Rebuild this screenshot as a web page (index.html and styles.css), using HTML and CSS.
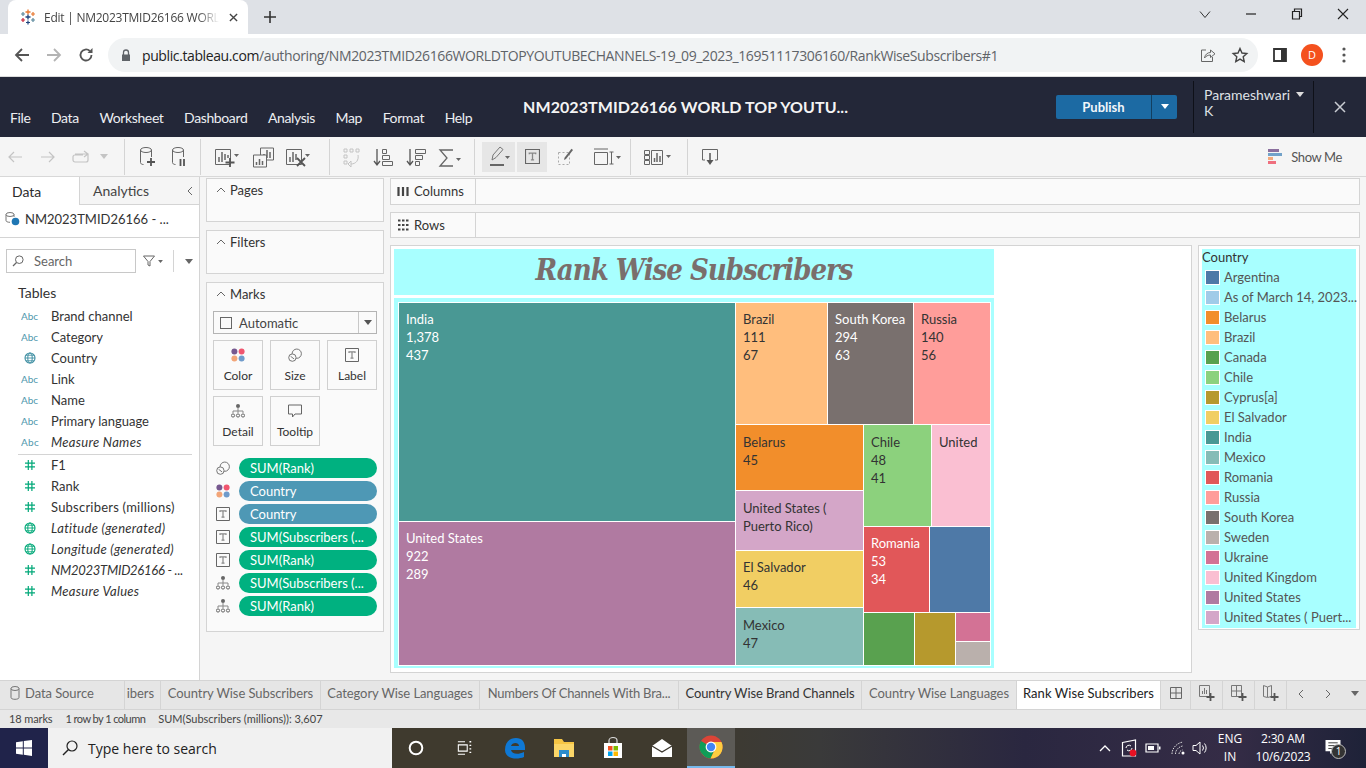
FILE: index.html
```html
<!DOCTYPE html>
<html lang="en">
<head>
<meta charset="utf-8">
<title>Edit | NM2023TMID26166 WORLD TOP YOUTUBE CHANNELS</title>
<link rel="stylesheet" href="styles.css">
</head>
<body>
<svg class="defs" width="0" height="0" aria-hidden="true">
  <defs>
    <symbol id="t-box" viewBox="0 0 14 14"><path d="M.5.5h13v13H.5z" fill="none" stroke="#666"/><path d="M4 5V3.800h6V5M7 4v6.200M5.500 10.200h3" fill="none" stroke="#888" stroke-width="1.200"/></symbol>
    <symbol id="size" viewBox="0 0 16 16"><circle cx="10" cy="6.500" r="5.300" fill="none" stroke="#666"/><circle cx="5" cy="11" r="4.200" fill="#fafafa" stroke="#666"/><path d="M3 9.500l4 3" stroke="#666"/></symbol>
    <symbol id="detail" viewBox="0 0 14 14"><circle cx="7" cy="2" r="2" fill="#666"/><path d="M7 4v3M2 9V7h10v2M7 7v2" fill="none" stroke="#888"/><circle cx="2" cy="11.500" r="1.600" fill="none" stroke="#666"/><circle cx="7" cy="11.500" r="1.600" fill="none" stroke="#666"/><circle cx="12" cy="11.500" r="1.600" fill="none" stroke="#666"/></symbol>
    <symbol id="color" viewBox="0 0 14 14"><circle cx="3.400" cy="3.400" r="3" fill="#76588f"/><circle cx="10.600" cy="3.400" r="3" fill="#f0566f"/><circle cx="3.400" cy="10.600" r="3" fill="#f2a578"/><circle cx="10.600" cy="10.600" r="3" fill="#6f9bcb"/></symbol>
    <symbol id="abc" viewBox="0 0 20 12"><text x="0" y="10" class="abc-text">Abc</text></symbol>
    <symbol id="globe" viewBox="0 0 12 12"><circle cx="6" cy="6" r="5" fill="none" stroke="#3f8fa3" stroke-width="1.100"/><ellipse cx="6" cy="6" rx="2.200" ry="5" fill="none" stroke="#3f8fa3"/><path d="M1 6h10M2 3.200h8M2 8.800h8" stroke="#3f8fa3" stroke-width=".9"/></symbol>
    <symbol id="globe-g" viewBox="0 0 12 12"><circle cx="6" cy="6" r="5" fill="none" stroke="#00a878" stroke-width="1.100"/><ellipse cx="6" cy="6" rx="2.200" ry="5" fill="none" stroke="#00a878"/><path d="M1 6h10M2 3.200h8M2 8.800h8" stroke="#00a878" stroke-width=".9"/></symbol>
    <symbol id="hash" viewBox="0 0 10 10"><path d="M3.300 0v10M6.900 0v10M0 3.200h10M0 6.800h10" stroke="#00a878" stroke-width="1.200" fill="none"/></symbol>
    <symbol id="chev" viewBox="0 0 10 6"><path d="M1 5l4-4 4 4" fill="none" stroke="#666"/></symbol>
  </defs>
</svg>

<header class="tabstrip">
  <div class="tab">
    <svg class="fav" viewBox="0 0 16 16"><path d="M8 .5v5M5.500 3h5" stroke="#e8762d" stroke-width="1.300"/><path d="M3 3v4M1 5h4" stroke="#5b879b" stroke-width="1.200"/><path d="M13 3v4M11 5h4" stroke="#e8762d" stroke-width="1.200"/><path d="M3 9v4M1 11h4" stroke="#c72035" stroke-width="1.200"/><path d="M13 9v4M11 11h4" stroke="#59879b" stroke-width="1.200"/><path d="M8 5.500v5M5.500 8h5" stroke="#1f447e" stroke-width="1.300"/><path d="M8 11.500v4M6 13.500h4" stroke="#1f447e" stroke-width="1.200"/></svg>
    <span class="tab-title">Edit | NM2023TMID26166 WORLD TOP YOUTUBE</span>
    <svg class="tab-x" viewBox="0 0 10 10"><path d="M1 1l8 8M9 1l-8 8" stroke="#444" stroke-width="1.500"/></svg>
  </div>
  <svg class="newtab" viewBox="0 0 12 12"><path d="M6 0v12M0 6h12" stroke="#333" stroke-width="1.600"/></svg>
  <div class="winctl">
    <svg viewBox="0 0 12 12" class="wc"><path d="M1 3.500l5 6 5-6" fill="none" stroke="#333"/></svg>
    <svg viewBox="0 0 12 12" class="wc wc-gap"><path d="M1 6h10" stroke="#222" stroke-width="1.200"/></svg>
    <svg viewBox="0 0 12 12" class="wc wc-gap"><path d="M1.500 3.500h7v7.500h-7zM3.500 3.500V1h7v7.500h-2" fill="none" stroke="#222" stroke-width="1.200"/></svg>
    <svg viewBox="0 0 12 12" class="wc wc-gap"><path d="M1 1l10 10M11 1L1 11" stroke="#222" stroke-width="1.100"/></svg>
  </div>
</header>

<nav class="addrbar">
  <svg class="nav-ic" viewBox="0 0 16 16"><path d="M15 8H2M8 2L2 8l6 6" fill="none" stroke="#555" stroke-width="1.800"/></svg>
  <svg class="nav-ic nav-fwd" viewBox="0 0 16 16"><path d="M1 8h13M8 2l6 6-6 6" fill="none" stroke="#b4b4b4" stroke-width="1.800"/></svg>
  <svg class="nav-ic nav-rel" viewBox="0 0 16 16"><path d="M13.500 8a5.500 5.500 0 1 1-1.700-4" fill="none" stroke="#555" stroke-width="1.800"/><path d="M14.500 1v5h-5z" fill="#555"/></svg>
  <div class="pill">
    <svg class="lock" viewBox="0 0 10 13"><path d="M2.500 6V3.500a2.500 2.500 0 0 1 5 0V6" fill="none" stroke="#5f6368" stroke-width="1.300"/><path d="M1 5.500h8V12H1z" fill="#5f6368"/></svg>
    <span class="url"><b class="url-host">public.tableau.com</b>/authoring/NM2023TMID26166WORLDTOPYOUTUBECHANNELS-19_09_2023_16951117306160/RankWiseSubscribers#1</span>
    <svg class="share" viewBox="0 0 16 16"><path d="M6 3H1.500v11.500h11V10" fill="none" stroke="#666"/><path d="M4.500 11c.5-3.500 3-5.500 6-5.500V3L15 6.800 10.500 10.500V8c-2.500 0-4.500 1-6 3z" fill="none" stroke="#666"/></svg>
    <svg class="star" viewBox="0 0 16 16"><path d="M8 1.500l2 4.500 4.800.5-3.600 3.200 1 4.800L8 12.100l-4.200 2.400 1-4.800L1.200 6.500 6 6z" fill="none" stroke="#444" stroke-width="1.400"/></svg>
  </div>
  <svg class="side-ic" viewBox="0 0 14 14"><path d="M1 1h12v12H1z" fill="none" stroke="#333" stroke-width="1.800"/><path d="M8 1h5v12H8z" fill="#333"/></svg>
  <span class="avatar">D</span>
  <svg class="dots" viewBox="0 0 4 16"><circle cx="2" cy="2" r="1.600" fill="#555"/><circle cx="2" cy="8" r="1.600" fill="#555"/><circle cx="2" cy="14" r="1.600" fill="#555"/></svg>
</nav>

<section class="appbar">
  <ul class="menu">
    <li>File</li><li>Data</li><li>Worksheet</li><li>Dashboard</li><li>Analysis</li><li>Map</li><li>Format</li><li>Help</li>
  </ul>
  <h1 class="wb-title">NM2023TMID26166 WORLD TOP YOUTU...</h1>
  <div class="publish"><span class="pub-main">Publish</span><span class="pub-arrow"><svg class="pub-caret" viewBox="0 0 8 5"><path d="M0 0h8L4 5z" fill="#fff"/></svg></span></div>
  <div class="user"><span>Parameshwari <svg class="user-caret" viewBox="0 0 8 5"><path d="M0 0h8L4 5z" fill="#ddd"/></svg></span><span>K</span></div>
  <svg class="app-x" viewBox="0 0 12 12"><path d="M1 1l10 10M11 1L1 11" stroke="#c9ccd2" stroke-width="1.500"/></svg>
</section>

<section class="toolbar">
  <div class="tg tg1">
    <svg class="ti" viewBox="0 0 24 24"><path d="M19 12H6M11 7l-5 5 5 5" fill="none" stroke="#c4c4c4" stroke-width="1.200"/></svg>
    <svg class="ti ti-m9" viewBox="0 0 24 24"><path d="M5 12h13M13 7l5 5-5 5" fill="none" stroke="#c4c4c4" stroke-width="1.200"/></svg>
    <svg class="ti ti-m9" viewBox="0 0 24 24"><path d="M6 9h13v6a2 2 0 0 1-2 2H6a2 2 0 0 1-2-2v-3a2 2 0 0 1 2-2h8M15 6l4 3-4 3" fill="none" stroke="#c4c4c4" stroke-width="1.200"/></svg>
    <svg class="caret" viewBox="0 0 8 5"><path d="M0 0h8L4 5z" fill="#c4c4c4"/></svg>
  </div>
  <div class="tg tg2">
    <svg class="ti" viewBox="0 0 24 24"><ellipse cx="11" cy="5" rx="5.500" ry="2.500" fill="none" stroke="#666"/><path d="M5.500 5v12.500c0 1 1 2 3 2M16.500 5v7" fill="none" stroke="#666"/><path d="M16 13v8M12 17h8" stroke="#555" stroke-width="1.800"/></svg>
    <svg class="ti ti-m8" viewBox="0 0 24 24"><ellipse cx="11" cy="5" rx="5.500" ry="2.500" fill="none" stroke="#666"/><path d="M5.500 5v12.500c0 1 1 2 3 2M16.500 5v7" fill="none" stroke="#666"/><path d="M13.500 14v7M17 14v7" stroke="#555" stroke-width="1.800"/></svg>
  </div>
  <div class="tg tg3">
    <svg class="ti" viewBox="0 0 24 24"><path d="M2.500 4.500h15v15h-15z" fill="none" stroke="#666"/><path d="M6 17v-5M9 17V7M12 15V9M15 13v-3" stroke="#666" stroke-width="1.500"/><path d="M17 13v9M12.500 17.500h9" stroke="#555" stroke-width="1.800"/><path d="M21 9h5l-2.500 3z" fill="#666"/></svg>
    <svg class="ti ti-m14" viewBox="0 0 24 24"><path d="M9.500 3h13v12h-13z" fill="#f5f5f5" stroke="#666"/><path d="M13 13V9M16 13V5M19 13V7" stroke="#666" stroke-width="1.500"/><path d="M2.500 10h13v12h-13z" fill="#f5f5f5" stroke="#666"/><path d="M5.500 20v-3M8.500 20v-6M11.500 20v-4" stroke="#666" stroke-width="1.500"/></svg>
    <svg class="ti ti-m9" viewBox="0 0 24 24"><path d="M2.500 4.500h15v15h-15z" fill="none" stroke="#666"/><path d="M6 17v-5M9 17V7M12 15V9" stroke="#666" stroke-width="1.500"/><path d="M13 13l8 8M21 13l-8 8" stroke="#555" stroke-width="1.800"/><path d="M21 9h5l-2.500 3z" fill="#666"/></svg>
  </div>
  <div class="tg tg4">
    <svg class="ti" viewBox="0 0 24 24"><path d="M5 4h3v3H5zM11 4h3v3h-3zM17 4h3v3h-3zM5 10h3v3H5zM5 16h3v3H5z" fill="none" stroke="#c4c4c4"/><path d="M19 10c1 5-2 9-7 9M12 16v6l-3-3z" fill="none" stroke="#c4c4c4"/></svg>
    <svg class="ti ti-m8" viewBox="0 0 24 24"><path d="M6 4v15M3 16l3 4 3-4" fill="none" stroke="#555" stroke-width="1.300"/><path d="M11.500 4.500h4v4h-4zM11.500 10.500h7v4h-7zM11.500 16.500h10v4h-10z" fill="none" stroke="#666"/></svg>
    <svg class="ti ti-m9" viewBox="0 0 24 24"><path d="M6 4v15M3 16l3 4 3-4" fill="none" stroke="#555" stroke-width="1.300"/><path d="M11.500 4.500h10v4h-10zM11.500 10.500h7v4h-7zM11.500 16.500h4v4h-4z" fill="none" stroke="#666"/></svg>
    <svg class="ti ti-m8" viewBox="0 0 24 24"><path d="M17 5H4l7 8-7 8h13" fill="none" stroke="#666" stroke-width="1.300"/><path d="M20 13h5l-2.500 3z" fill="#666"/></svg>
  </div>
  <div class="tg tg5">
    <span class="tbtn tbtn-a"><svg class="ti" viewBox="0 0 24 24"><path d="M7 15l1-5 7-8 3 2.500-7 8z" fill="none" stroke="#777"/><path d="M5 20h14" stroke="#666" stroke-width="2"/><path d="M20 11h5l-2.500 3z" fill="#666"/></svg></span>
    <span class="tbtn tbtn-b"><svg class="ti-t" viewBox="0 0 14 14"><use href="#t-box"/></svg></span>
    <svg class="ti ti-m7" viewBox="0 0 24 24"><path d="M4.500 7.500h11v12h-11z" fill="none" stroke="#aaa" stroke-dasharray="2 2"/><path d="M10 15l2-1 7-9-1.500-1.200-7 9z" fill="#666"/></svg>
    <svg class="ti ti-m13" viewBox="0 0 24 24"><path d="M3.500 7.500h13v12h-13zM3 4h14" fill="none" stroke="#666"/><path d="M20.500 7v12M18.500 7h4M18.500 19h4" fill="none" stroke="#666"/><path d="M25 11h5l-2.500 3z" fill="#666"/></svg>
  </div>
  <div class="tg tg6">
    <svg class="ti" viewBox="0 0 24 24"><path d="M2.500 5.500h5v4h-5zM2.500 10.500h5v4h-5zM2.500 15.500h5v4h-5zM9.500 5.500h11v14h-11z" fill="none" stroke="#666"/><path d="M12.500 17v-4M15 17V8M18 17v-6" stroke="#666" stroke-width="1.500"/><path d="M24 10h5l-2.500 3z" fill="#666"/></svg>
  </div>
  <div class="tg tg7">
    <svg class="ti" viewBox="0 0 24 24"><path d="M7 15H4.500V4.500h15V15H17" fill="none" stroke="#666"/><path d="M12 8v9" stroke="#555" stroke-width="1.500"/><path d="M8.500 15h7L12 20z" fill="#555"/></svg>
  </div>
  <div class="showme">
    <svg class="sm-ic" viewBox="0 0 14 16"><path d="M0 0h11v3H0z" fill="#8b6f9e"/><path d="M0 4h14v3H0z" fill="#72a2c9"/><path d="M0 8h5v3H0z" fill="#f2a97c"/><path d="M0 12h8v3H0z" fill="#ef6f7e"/></svg>
    <span>Show Me</span>
  </div>
</section>

<main class="workspace">
  <aside class="datapane">
    <div class="dp-tabs">
      <span class="dp-tab dp-active">Data</span>
      <span class="dp-tab dp-inactive">Analytics<svg class="dp-back" viewBox="0 0 6 10"><path d="M5 1L1 5l4 4" fill="none" stroke="#666"/></svg></span>
    </div>
    <div class="dp-source">
      <svg class="src-ic" viewBox="0 0 15 14"><ellipse cx="5" cy="2.500" rx="4" ry="2" fill="none" stroke="#777"/><path d="M1 2.500v6c0 1 1.500 1.800 4 1.800M9 2.500V5" fill="none" stroke="#777"/><circle cx="10.500" cy="9.500" r="3.800" fill="#1f77b4"/></svg>
      <span>NM2023TMID26166 - ...</span>
    </div>
    <div class="dp-search">
      <div class="searchbox"><svg class="search-ic" viewBox="0 0 12 12"><circle cx="7.300" cy="4.700" r="3.800" fill="none" stroke="#666"/><path d="M4.500 7.500L1 11" stroke="#666" stroke-width="1.200"/></svg><span>Search</span></div>
      <svg class="funnel" viewBox="0 0 12 12"><path d="M.5 1h11L7 6.500V11L5 10V6.500z" fill="none" stroke="#666"/></svg>
      <svg class="caret small" viewBox="0 0 8 5"><path d="M0 0h8L4 5z" fill="#666"/></svg>
      <i class="vsep"></i>
      <svg class="caret lone" viewBox="0 0 8 5"><path d="M0 0h8L4 5z" fill="#666"/></svg>
    </div>
    <h2 class="tables">Tables</h2>
    <ul class="fields dims">
      <li><svg class="f-abc"><use href="#abc"/></svg>Brand channel</li>
      <li><svg class="f-abc"><use href="#abc"/></svg>Category</li>
      <li><svg class="f-sym"><use href="#globe"/></svg>Country</li>
      <li><svg class="f-abc"><use href="#abc"/></svg>Link</li>
      <li><svg class="f-abc"><use href="#abc"/></svg>Name</li>
      <li><svg class="f-abc"><use href="#abc"/></svg>Primary language</li>
      <li class="it"><svg class="f-abc"><use href="#abc"/></svg>Measure Names</li>
    </ul>
    <ul class="fields meas">
      <li><svg class="f-hash"><use href="#hash"/></svg>F1</li>
      <li><svg class="f-hash"><use href="#hash"/></svg>Rank</li>
      <li class="wide"><svg class="f-hash"><use href="#hash"/></svg>Subscribers (millions)</li>
      <li class="it"><svg class="f-sym"><use href="#globe-g"/></svg>Latitude (generated)</li>
      <li class="it"><svg class="f-sym"><use href="#globe-g"/></svg>Longitude (generated)</li>
      <li class="it tight"><svg class="f-hash"><use href="#hash"/></svg>NM2023TMID26166 - ...</li>
      <li class="it"><svg class="f-hash"><use href="#hash"/></svg>Measure Values</li>
    </ul>
  </aside>

  <div class="cards">
    <section class="card card-sm"><h3><svg class="chev"><use href="#chev"/></svg>Pages</h3></section>
    <section class="card card-sm"><h3><svg class="chev"><use href="#chev"/></svg>Filters</h3></section>
    <section class="card card-marks">
      <h3><svg class="chev"><use href="#chev"/></svg>Marks</h3>
      <div class="marktype"><i class="mt-box"></i><span class="mt-label">Automatic</span><span class="mt-drop"><svg class="caret" viewBox="0 0 8 5"><path d="M0 0h8L4 5z" fill="#555"/></svg></span></div>
      <div class="markbtns">
        <div class="mb"><svg class="mb-ic"><use href="#color"/></svg>Color</div>
        <div class="mb"><svg class="mb-ic"><use href="#size"/></svg>Size</div>
        <div class="mb"><svg class="mb-ic"><use href="#t-box"/></svg>Label</div>
        <div class="mb"><svg class="mb-ic"><use href="#detail"/></svg>Detail</div>
        <div class="mb"><svg class="mb-ic" viewBox="0 0 14 14"><path d="M.5 1h13v9H7l-2.500 3v-3h-4z" fill="none" stroke="#666"/></svg>Tooltip</div>
      </div>
      <ul class="pills">
        <li><svg class="pill-ic"><use href="#size"/></svg><span class="p p-g">SUM(Rank)</span></li>
        <li><svg class="pill-ic"><use href="#color"/></svg><span class="p p-b">Country</span></li>
        <li><svg class="pill-ic"><use href="#t-box"/></svg><span class="p p-b">Country</span></li>
        <li><svg class="pill-ic"><use href="#t-box"/></svg><span class="p p-g">SUM(Subscribers (...</span></li>
        <li><svg class="pill-ic"><use href="#t-box"/></svg><span class="p p-g">SUM(Rank)</span></li>
        <li><svg class="pill-ic"><use href="#detail"/></svg><span class="p p-g">SUM(Subscribers (...</span></li>
        <li><svg class="pill-ic"><use href="#detail"/></svg><span class="p p-g">SUM(Rank)</span></li>
      </ul>
    </section>
  </div>

  <div class="canvas">
    <div class="shelf shelf-c">
      <div class="shelf-label"><svg class="shelf-ic" viewBox="0 0 12 12"><path d="M1.500 2v9M6 2v9M10.500 2v9" stroke="#444" stroke-width="2.200"/></svg>Columns</div>
    </div>
    <div class="shelf shelf-r">
      <div class="shelf-label"><svg class="shelf-ic" viewBox="0 0 12 12"><path d="M1 1.500h11M1 6h11M1 10.500h11" stroke="#444" stroke-width="2" stroke-dasharray="2.500 1.500"/></svg>Rows</div>
    </div>
    <div class="vizrow">
      <div class="viz">
        <h2 class="viz-title">Rank Wise Subscribers</h2>
        <div class="tree">
          <div class="tm">
            <div class="col c-left">
              <div class="cell india lt h-india">India<br>1,378<br>437</div>
              <div class="cell usa lt h-usa">United States<br>922<br>289</div>
            </div>
            <div class="col c-right">
              <div class="rowx h-top">
                <div class="cell brazil w-br">Brazil<br>111<br>67</div>
                <div class="cell korea lt w-sk">South Korea<br>294<br>63</div>
                <div class="cell russia w-ru">Russia<br>140<br>56</div>
              </div>
              <div class="rowx h-bot">
                <div class="col w-bl">
                  <div class="cell low belarus h-be">Belarus<br>45</div>
                  <div class="cell low uspr h-pr">United States (<br>Puerto Rico)</div>
                  <div class="cell elsal h-es">El Salvador<br>46</div>
                  <div class="cell low mexico h-me">Mexico<br>47</div>
                </div>
                <div class="col w-brr">
                  <div class="rowx h-r1">
                    <div class="cell low chile w-ch">Chile<br>48<br>41</div>
                    <div class="cell low uk w-uk">United</div>
                  </div>
                  <div class="rowx h-r2">
                    <div class="cell romania lt w-ro">Romania<br>53<br>34</div>
                    <div class="cell argentina w-ar"></div>
                  </div>
                  <div class="rowx h-r3">
                    <div class="cell canada w-ca"></div>
                    <div class="cell cyprus w-cy"></div>
                    <div class="col w-uk2">
                      <div class="cell ukraine h-uk"></div>
                      <div class="cell sweden h-sw"></div>
                    </div>
                  </div>
                </div>
              </div>
            </div>
          </div>
        </div>
      </div>
      <aside class="legend">
        <div class="legend-in">
          <h4>Country</h4>
          <ul>
            <li><i class="sw argentina"></i>Argentina</li>
            <li><i class="sw asof"></i>As of March 14, 2023...</li>
            <li><i class="sw belarus"></i>Belarus</li>
            <li><i class="sw brazil"></i>Brazil</li>
            <li><i class="sw canada"></i>Canada</li>
            <li><i class="sw chile"></i>Chile</li>
            <li><i class="sw cyprus"></i>Cyprus[a]</li>
            <li><i class="sw elsal"></i>El Salvador</li>
            <li><i class="sw india"></i>India</li>
            <li><i class="sw mexico"></i>Mexico</li>
            <li><i class="sw romania"></i>Romania</li>
            <li><i class="sw russia"></i>Russia</li>
            <li><i class="sw korea"></i>South Korea</li>
            <li><i class="sw sweden"></i>Sweden</li>
            <li><i class="sw ukraine"></i>Ukraine</li>
            <li><i class="sw uk"></i>United Kingdom</li>
            <li><i class="sw usa"></i>United States</li>
            <li><i class="sw uspr"></i>United States ( Puert...</li>
          </ul>
        </div>
      </aside>
    </div>
  </div>
</main>

<section class="sheettabs">
  <div class="st st-ds"><svg class="st-db" viewBox="0 0 10 14"><ellipse cx="5" cy="2.500" rx="4" ry="2" fill="none" stroke="#777"/><path d="M1 2.500v9c0 1 1.500 1.800 4 1.800s4-.8 4-1.800v-9" fill="none" stroke="#777"/></svg>Data Source</div>
  <div class="st st-cut">ibers</div>
  <div class="st st-1">Country Wise Subscribers</div>
  <div class="st st-2">Category Wise Languages</div>
  <div class="st st-3">Numbers Of Channels With Bra...</div>
  <div class="st st-4 st-dark">Country Wise Brand Channels</div>
  <div class="st st-5">Country Wise Languages</div>
  <div class="st st-6 st-on">Rank Wise Subscribers</div>
  <div class="st st-7"><svg class="st-ic" viewBox="0 0 12 12"><path d="M.5.500h11v11H.5zM.5 6h11M6 .5v11" fill="none" stroke="#666"/></svg></div>
  <div class="st st-add"><svg class="st-new" viewBox="0 0 18 18"><path d="M1.500 1.500h10v11h-10z" fill="none" stroke="#777"/><path d="M4.500 10V7M6.500 10V4M8.500 10V6" stroke="#777"/><path d="M12.500 9v8M8.500 13h8" stroke="#555" stroke-width="1.800"/></svg></div>
  <div class="st st-add"><svg class="st-new" viewBox="0 0 18 18"><path d="M1.500 1.500h10v11h-10zM1.500 7h10M6.500 1.500v11" fill="none" stroke="#777"/><path d="M12.500 9v8M8.500 13h8" stroke="#555" stroke-width="1.800"/></svg></div>
  <div class="st st-add"><svg class="st-new" viewBox="0 0 18 18"><path d="M1.500 1.500l4 1.500 4-1.500v11l-4 1-4-1zM5.500 3v10" fill="none" stroke="#777"/><path d="M12.500 9v8M8.500 13h8" stroke="#555" stroke-width="1.800"/></svg></div>
  <div class="st-nav">
    <svg class="sn" viewBox="0 0 6 10"><path d="M5 1L1 5l4 4" fill="none" stroke="#666"/></svg>
    <svg class="sn" viewBox="0 0 6 10"><path d="M1 1l4 4-4 4" fill="none" stroke="#666"/></svg>
    <svg class="caret" viewBox="0 0 8 5"><path d="M0 0h8L4 5z" fill="#666"/></svg>
  </div>
</section>

<section class="status"><span class="s1">18 marks</span><span class="s2">1 row by 1 column</span><span>SUM(Subscribers (millions)): 3,607</span></section>

<footer class="taskbar">
  <div class="start"><svg class="win" viewBox="0 0 16 16"><path d="M0 2.200L6.800 1.200V7.500H0zM7.800 1L16 0v7.500H7.800zM0 8.500h6.800v6.300L0 13.800zM7.800 8.500H16V16l-8.200-1.200z" fill="#fff"/></svg></div>
  <div class="tsearch"><svg class="ts-ic" viewBox="0 0 16 16"><circle cx="10" cy="6" r="5" fill="none" stroke="#222" stroke-width="1.200"/><path d="M6.500 9.500L1 15" stroke="#222" stroke-width="1.400"/></svg><span>Type here to search</span></div>
  <div class="tapps">
    <span class="ta"><svg class="ta-ic" viewBox="0 0 16 16"><circle cx="8" cy="8" r="6.300" fill="none" stroke="#fff" stroke-width="2"/></svg></span>
    <span class="ta"><svg class="ta-ic" viewBox="0 0 18 16"><path d="M1 1h8M1 15h8M1.500 4.500h10v7h-10z" fill="none" stroke="#fff" stroke-width="1.200"/><path d="M14 1h2M14 5h2M14 9h2M14 13h2" stroke="#fff" stroke-width="1.500"/></svg></span>
    <span class="ta"><svg class="ta-big" viewBox="0 0 22 22"><path d="M1 13C1 5 6 1 12 1c6 0 9 4 9 10v2H7c.5 4 7 5 13 2v5c-7 3-19 2-19-7zM7 9h8c0-4-7-4-8 0z" fill="#0f78d4"/></svg></span>
    <span class="ta"><svg class="ta-big" viewBox="0 0 22 22"><path d="M1 2h8l2 3h10v15H1z" fill="#f6c544"/><path d="M1 7h20v13H1z" fill="#fbd668"/><path d="M6 13h10v7H6z" fill="#2d8ccc"/><path d="M9 17h4v3H9z" fill="#fff"/></svg></span>
    <span class="ta"><svg class="ta-big" viewBox="0 0 22 22"><path d="M2 6h18v15H2z" fill="#fff"/><path d="M7 6V3.500a4 3 0 0 1 8 0V6" fill="none" stroke="#ddd" stroke-width="1.200"/><path d="M6 9h4.500v4.500H6z" fill="#f25022"/><path d="M11.500 9H16v4.500h-4.500z" fill="#7fba00"/><path d="M6 14.500h4.500V19H6z" fill="#00a4ef"/><path d="M11.500 14.500H16V19h-4.500z" fill="#ffb900"/></svg></span>
    <span class="ta"><svg class="ta-big" viewBox="0 0 22 22"><path d="M1 9l10-7 10 7v11H1z" fill="#fff"/><path d="M1 9l10 6 10-6" fill="none" stroke="#3a352b" stroke-width="1.300"/></svg></span>
    <span class="ta ta-on"><svg class="ta-chrome" viewBox="0 0 24 24"><circle cx="12" cy="12" r="11.500" fill="#db4437"/><path d="M12 12L2.500 18.500A11.500 11.500 0 0 1 2 6z" fill="#0f9d58"/><path d="M12 12l5 0-5.500 11.500A11.500 11.500 0 0 1 2.500 18z" fill="#0f9d58"/><path d="M12 7h10.500a11.500 11.500 0 0 1-11 16.500L17 12z" fill="#ffcd40"/><circle cx="12" cy="12" r="5.400" fill="#fff"/><circle cx="12" cy="12" r="4.200" fill="#4285f4"/></svg></span>
  </div>
  <div class="tray">
    <svg class="tr-up" viewBox="0 0 12 7"><path d="M1 6l5-5 5 5" fill="none" stroke="#fff" stroke-width="1.300"/></svg>
    <svg class="tr-sec" viewBox="0 0 16 18"><path d="M1.500 3.500L14.500 1v16H1.500z" fill="none" stroke="#fff" stroke-width="1.200"/><path d="M5 9a3 3 0 0 1 5-2M11 9a3 3 0 0 1-5 2" fill="none" stroke="#fff"/><circle cx="12" cy="14" r="3.400" fill="#e81123"/></svg>
    <svg class="tr-bat" viewBox="0 0 16 10"><path d="M1 1h12v8H1z" fill="none" stroke="#fff" stroke-width="1.200"/><path d="M3 3h6v4H3z" fill="#fff"/><path d="M14 3.500h1.500v3H14z" fill="#fff"/></svg>
    <svg class="tr-wifi" viewBox="0 0 14 14"><path d="M1 13C1 7 6 2 12 1M4.500 13c0-4 3-7 7-8M8 13c0-2 1.500-3.500 3.500-4" fill="none" stroke="#ddd" stroke-dasharray="1.500 1"/><circle cx="12" cy="12" r="1.500" fill="#fff"/></svg>
    <svg class="tr-vol" viewBox="0 0 16 16"><path d="M1 5.500h3L8 2v12L4 10.500H1z" fill="none" stroke="#fff"/><path d="M10.500 5.500a4 4 0 0 1 0 5M12.500 3.500a7 7 0 0 1 0 9" fill="none" stroke="#fff"/></svg>
    <div class="tr-lang"><span>ENG</span><span>IN</span></div>
    <div class="tr-clock"><span>2:30 AM</span><span>10/6/2023</span></div>
    <div class="tr-note"><svg class="note-ic" viewBox="0 0 16 16"><path d="M0 0h16v12H8l-3 3v-3H0z" fill="#fff"/><path d="M3 3h10M3 6h10M3 9h7" stroke="#333"/></svg><span class="note-badge">1</span></div>
  </div>
</footer>
</body>
</html>
```

FILE: styles.css
```css
* { box-sizing: border-box; }
html, body { margin: 0; padding: 0; }
body {
  width: 1366px; height: 768px; overflow: hidden;
  display: flex; flex-direction: column;
  font-family: Lato, "Open Sans", sans-serif; font-size: 13px; color: #333;
  background: #f5f5f5;
}
ul { list-style: none; margin: 0; padding: 0; }
h1, h2, h3, h4 { margin: 0; font-weight: 400; }
svg { display: block; flex: none; overflow: visible; }
.defs { position: absolute; }
.abc-text { font: 10px Lato, sans-serif; fill: #4f97ad; }

/* browser tab strip */
.tabstrip { height: 34px; background: #dee1e6; display: flex; align-items: flex-end; padding-left: 8px; }
.tab { width: 240px; height: 34px; background: #fff; border-radius: 8px 8px 0 0; display: flex; align-items: center; padding-left: 12px; }
.fav { width: 16px; height: 16px; }
.tab-title { font: 12px "Open Sans", sans-serif; color: #444; margin-left: 8px; width: 175px; white-space: nowrap; overflow: hidden; letter-spacing: -.25px; -webkit-mask-image: linear-gradient(90deg, #000 88%, transparent); mask-image: linear-gradient(90deg, #000 88%, transparent); }
.tab-x { width: 9px; height: 9px; margin-left: 10px; }
.newtab { width: 12px; height: 12px; margin: 0 0 11px 16px; }
.winctl { margin-left: auto; display: flex; align-items: center; height: 28px; padding-right: 17px; align-self: flex-start; }
.wc { width: 12px; height: 12px; }
.wc-gap { margin-left: 34px; }

/* address bar */
.addrbar { height: 43px; background: #fff; display: flex; align-items: center; padding-left: 14px; border-bottom: 1px solid #dcdcdc; }
.nav-ic { width: 16px; height: 16px; }
.nav-fwd { margin-left: 16px; }
.nav-rel { margin-left: 16px; }
.pill { width: 1150px; height: 34px; margin-left: 14px; background: #f1f3f4; border-radius: 17px; display: flex; align-items: center; padding-left: 13px; }
.lock { width: 10px; height: 13px; }
.url { font: 14px "Open Sans", sans-serif; color: #5f6368; margin-left: 11px; width: 880px; white-space: nowrap; overflow: hidden; letter-spacing: -.39px; }
.url-host { font-weight: 400; color: #222; }
.share { width: 16px; height: 16px; margin-left: 178px; }
.star { width: 16px; height: 16px; margin-left: 16px; }
.side-ic { width: 14px; height: 14px; margin-left: 15px; }
.avatar { width: 22px; height: 22px; margin-left: 14px; border-radius: 50%; background: #f4511e; color: #fff; font: 11px/22px "Open Sans", sans-serif; text-align: center; }
.dots { width: 4px; height: 16px; margin-left: 19px; }

/* dark app bar */
.appbar { height: 60px; background: #232738; color: #fff; display: flex; align-items: center; position: relative; padding-left: 10px; }
.menu { display: flex; gap: 20.6px; font-size: 14px; color: #eceef2; margin-top: 21px; letter-spacing: -.38px; width: 464px; }
.wb-title { font-size: 16px; font-weight: 700; color: #f4f4f4; margin-left: 49px; width: 533px; margin-top: -1px; white-space: nowrap; letter-spacing: .09px; }
.publish { display: flex; height: 24px; margin-top: -1px; border-radius: 2px; overflow: hidden; background: #1c6aa3; }
.pub-main { width: 96px; text-align: center; font: 700 13px/24px Lato, sans-serif; color: #f2f6fa; border-right: 1px solid #123f60; }
.pub-arrow { width: 25px; display: flex; align-items: center; justify-content: center; }
.pub-caret { width: 8px; height: 5px; }
.user { width: 121px; margin-left: 16px; height: 52px; border: solid #0e1018; border-width: 0 1px; padding: 6px 0 0 10px; font-size: 14px; line-height: 16px; color: #dfe1e6; display: flex; flex-direction: column; }
.user-caret { display: inline-block; width: 8px; height: 5px; margin: 0 0 3px 2px; }
.app-x { width: 12px; height: 12px; margin-left: 20px; }

/* toolbar */
.toolbar { height: 40px; background: #f5f5f5; display: flex; align-items: center; border-bottom: 1px solid #d8d8d8; }
.tg { height: 36px; display: flex; align-items: center; border-right: 1px solid #d4d4d4; }
.tg1 { width: 125px; padding-left: 3px; }
.tg2 { width: 76px; padding-left: 10px; }
.tg3 { width: 129px; padding-left: 12px; }
.tg4 { width: 145px; padding-left: 9px; }
.tg5 { width: 156px; padding-left: 7px; }
.tg6 { width: 57px; padding-left: 11px; }
.tg7 { width: auto; padding-left: 10px; border-right: 0; }
.ti { width: 24px; height: 24px; }
.ti-m9 { margin-left: 9px; }
.ti-m8 { margin-left: 8px; }
.ti-m14 { margin-left: 14px; }
.ti-m7 { margin-left: 7px; }
.ti-m13 { margin-left: 13px; }
.caret { width: 8px; height: 5px; }
.tg1 .caret { margin-left: 7px; }
.tbtn { height: 30px; display: flex; align-items: center; justify-content: center; background: #e6e6e6; }
.tbtn-a { width: 33px; padding-right: 4px; }
.tbtn-b { width: 30px; margin-left: 2px; }
.ti-t { width: 15px; height: 15px; }
.showme { margin-left: auto; display: flex; align-items: center; padding-right: 24px; color: #555; font-size: 13px; letter-spacing: -.4px; }
.sm-ic { width: 14px; height: 16px; margin-right: 9px; }

/* workspace */
.workspace { height: 503px; display: flex; background: #f5f5f5; }
.datapane { width: 200px; background: #fff; border-right: 1px solid #d4d4d4; }
.dp-tabs { display: flex; height: 28px; }
.dp-tab { display: flex; align-items: center; font-size: 14px; }
.dp-active { width: 79px; padding-left: 12px; color: #2b2b2b; }
.dp-inactive { flex: 1; padding-left: 13px; background: #f5f5f5; border: solid #d4d4d4; border-width: 0 0 1px 1px; color: #444; justify-content: space-between; padding-right: 6px; }
.dp-back { width: 6px; height: 10px; }
.dp-source { height: 33px; padding: 0 0 4px 5px; display: flex; align-items: center; gap: 5px; border-bottom: 1px solid #d4d4d4; color: #333; }
.src-ic { width: 15px; height: 14px; }
.dp-search { display: flex; align-items: center; margin-top: 11px; padding-left: 6px; height: 24px; }
.searchbox { width: 130px; height: 24px; border: 1px solid #c8c8c8; display: flex; align-items: center; padding-left: 5px; color: #666; background: #fff; }
.search-ic { width: 12px; height: 12px; margin-right: 10px; }
.funnel { width: 12px; height: 12px; margin-left: 7px; }
.caret.small { width: 5px; height: 3px; margin-left: 3px; }
.vsep { width: 1px; height: 22px; background: #d4d4d4; margin-left: 10px; }
.caret.lone { margin-left: 11px; }
.tables { font-size: 14px; color: #333; margin: 11px 0 0 18px; line-height: 18px; }
.fields { font-size: 13px; }
.fields li { height: 21px; display: flex; align-items: center; padding-left: 51px; position: relative; color: #333; white-space: nowrap; }
.fields .it { font-style: italic; letter-spacing: .3px; }
.fields .wide { letter-spacing: .22px; }
.fields .tight { letter-spacing: -.25px; }
.dims { margin: 3px 6px 0 0; }
.meas { margin: 2px 7px 0 18px; border-top: 1px solid #d4d4d4; }
.meas li { padding-left: 33px; }
.meas li:first-child { height: 20px; }
.f-abc { position: absolute; left: 21px; top: 5px; width: 20px; height: 12px; }
.f-sym { position: absolute; left: 24px; top: 5px; width: 12px; height: 12px; }
.f-hash { position: absolute; left: 7px; top: 6px; width: 10px; height: 10px; }
.meas .f-sym { left: 6px; }
.meas li:first-child .f-hash { top: 5px; }

/* cards */
.cards { width: 190px; padding: 1px 6px 0; display: flex; flex-direction: column; gap: 8px; }
.card { background: #fafafa; border: 1px solid #d4d4d4; }
.card-sm { height: 44px; }
.card h3 { font-size: 13px; color: #333; display: flex; align-items: center; height: 22px; padding-left: 9px; gap: 4px; }
.chev { width: 10px; height: 6px; }
.card-marks { height: 350px; padding-bottom: 6px; }
.card-marks .marktype { margin: 6px 6px 0; }
.marktype { height: 23px; border: 1px solid #b4b4b4; display: flex; align-items: center; background: #fafafa; }
.mt-box { width: 12px; height: 12px; border: 1px solid #666; margin-left: 6px; }
.mt-label { margin-left: 7px; flex: 1; color: #444; }
.mt-drop { width: 18px; height: 21px; border-left: 1px solid #c8c8c8; display: flex; align-items: center; justify-content: center; }
.markbtns { display: grid; grid-template-columns: repeat(3, 50px); gap: 6px 7px; margin: 6px 6px 0; }
.mb { height: 50px; border: 1px solid #d0d0d0; display: flex; flex-direction: column; align-items: center; justify-content: flex-end; padding-bottom: 6px; font-size: 12px; color: #333; }
.mb-ic { width: 14px; height: 14px; margin-bottom: 6px; }
.pills { margin: 12px 6px 0 9px; display: flex; flex-direction: column; gap: 3px; }
.pills li { display: flex; align-items: center; height: 20px; }
.pill-ic { width: 14px; height: 14px; }
.p { margin-left: 9px; width: 138px; height: 20px; border-radius: 10px; color: #fff; font-size: 13px; line-height: 20px; padding-left: 11px; white-space: nowrap; }
.p-g { background: #00b180; }
.p-b { background: #4e98b5; }

/* canvas */
.canvas { flex: 1; display: flex; flex-direction: column; padding: 1px 6px 0 0; }
.shelf { height: 27px; border: 1px solid #d4d4d4; background: #fafafa; margin-bottom: 7px; }
.shelf-r { height: 26px; }
.shelf-label { width: 85px; height: 100%; border-right: 1px solid #d4d4d4; display: flex; align-items: center; padding: 0 0 2px 6px; gap: 5px; color: #333; }
.shelf-r .shelf-label { padding-bottom: 1px; }
.shelf-ic { width: 12px; height: 12px; }
.vizrow { display: flex; gap: 6px; align-items: flex-start; }
.viz { width: 802px; height: 428px; background: #fff; border: 1px solid #d4d4d4; padding: 3px; }
.viz-title { width: 600px; height: 46px; background: #a8ffff; text-align: center; font: italic 700 29px/42px "DejaVu Serif Condensed", "DejaVu Serif", serif; color: #7a6e6c; letter-spacing: -1px; white-space: nowrap; }
.tree { width: 600px; height: 370px; margin-top: 3px; background: #a8ffff; padding: 4px 3px 2px 4px; }
.tm { width: 593px; height: 364px; background: #fff; padding: 1px; display: flex; gap: 1px; }
.col { display: flex; flex-direction: column; gap: 1px; }
.rowx { display: flex; gap: 1px; }
.c-left { width: 336px; }
.c-right { width: 254px; }
.cell { padding: 7px 0 0 7px; font-size: 13px; line-height: 18px; color: #333; overflow: hidden; white-space: nowrap; }
.cell.low { padding-top: 8px; }
.lt { color: #fff; }
.h-india { height: 218px; }
.h-usa { height: 143px; }
.h-top { height: 121px; }
.h-bot { height: 240px; }
.w-br { width: 91px; }
.w-sk { width: 85px; }
.w-ru { width: 76px; }
.w-bl { width: 127px; }
.w-brr { width: 126px; }
.h-be { height: 65px; }
.h-pr { height: 59px; }
.h-es { height: 56px; }
.h-me { height: 57px; }
.h-r1 { height: 101px; }
.h-r2 { height: 85px; }
.h-r3 { height: 52px; }
.w-ch { width: 67px; }
.w-uk { width: 58px; }
.w-ro { width: 65px; }
.w-ar { width: 60px; }
.w-ca { width: 50px; }
.w-cy { width: 40px; }
.w-uk2 { width: 34px; }
.h-uk { height: 28px; }
.h-sw { height: 23px; }

.india { background: #499894; }
.usa { background: #b07aa1; }
.brazil { background: #ffbe7d; }
.korea { background: #79706e; }
.russia { background: #ff9d9a; }
.belarus { background: #f28e2b; }
.uspr { background: #d4a6c8; }
.elsal { background: #f1ce63; }
.mexico { background: #86bcb6; }
.chile { background: #8cd17d; }
.uk { background: #fabfd2; }
.romania { background: #e15759; }
.argentina { background: #4e79a7; }
.canada { background: #59a14f; }
.cyprus { background: #b6992d; }
.ukraine { background: #d37295; }
.sweden { background: #bab0ac; }
.asof { background: #a0cbe8; }

/* legend */
.legend { width: 162px; height: 385px; background: #fff; border: 1px solid #d4d4d4; padding: 3px; }
.legend-in { height: 379px; background: #a8ffff; }
.legend h4 { font-size: 13px; line-height: 16px; color: #333; margin-bottom: 2px; }
.legend li { height: 20px; display: flex; align-items: center; padding-left: 3px; font-size: 13px; color: #555; white-space: nowrap; }
.sw { width: 15px; height: 15px; border: 1px solid #fff; margin-right: 4px; flex: none; }

/* sheet tabs */
.sheettabs { height: 30px; background: #e6e6e6; border: solid #d4d4d4; border-width: 1px 0; display: flex; align-items: stretch; }
.st { display: flex; align-items: center; justify-content: center; padding-bottom: 4px; border-right: 1px solid #d4d4d4; color: #666; font-size: 13px; white-space: nowrap; overflow: hidden; letter-spacing: -.08px; }
.st-ds { width: 125px; justify-content: flex-start; padding-left: 10px; gap: 5px; }
.st-db { width: 10px; height: 14px; }
.st-cut { width: 36px; justify-content: flex-end; padding-right: 6px; }
.st-1 { width: 160px; }
.st-2 { width: 159px; }
.st-3 { width: 199px; letter-spacing: -.22px; }
.st-4 { width: 183px; }
.st-5 { width: 155px; }
.st-6 { width: 144px; letter-spacing: .08px; }
.st-7 { width: 30px; }
.st-add { width: 32px; }
.st-dark { color: #333; }
.st-on { background: #fff; color: #222; }
.st-ic { width: 12px; height: 12px; }
.st-new { width: 18px; height: 18px; }
.st-nav { flex: 1; display: flex; align-items: center; justify-content: space-between; padding: 0 7px 3px 11px; }
.sn { width: 6px; height: 10px; }

/* status bar */
.status { height: 18px; background: #e8e8e8; display: flex; align-items: center; gap: 13px; padding: 0 0 2px 9px; font-size: 11px; color: #444; }
.s1 { letter-spacing: -.12px; }
.s2 { letter-spacing: -.55px; }

/* taskbar */
.taskbar { height: 40px; display: flex; background: linear-gradient(90deg, #3f3a2e 0, #3f3a2e 50%, #3a3a3a 60%, #2a2740 75%, #352c46 90%, #1e2238 100%); color: #fff; }
.start { width: 48px; background: #20234a; display: flex; align-items: center; justify-content: center; }
.win { width: 16px; height: 16px; }
.tsearch { width: 344px; background: #f1f1f1; display: flex; align-items: center; padding-left: 14px; color: #222; font: 14px "Open Sans", sans-serif; }
.ts-ic { width: 16px; height: 16px; margin-right: 10px; }
.tapps { display: flex; margin-left: 1px; }
.ta { width: 49px; display: flex; align-items: center; justify-content: center; }
.ta-ic { width: 16px; height: 16px; margin-left: -3px; }
.ta-big { width: 22px; height: 22px; margin-left: -1px; }
.ta-on { width: 48px; background: #5c5a56; border-bottom: 2px solid #76b9ed; }
.ta-chrome { width: 24px; height: 24px; }
.tray { margin-left: auto; display: flex; align-items: center; padding-right: 25px; }
.tr-up { width: 12px; height: 7px; }
.tr-sec { width: 16px; height: 18px; margin-left: 10px; }
.tr-bat { width: 16px; height: 10px; margin-left: 8px; }
.tr-wifi { width: 14px; height: 14px; margin-left: 10px; }
.tr-vol { width: 16px; height: 16px; margin-left: 7px; }
.tr-lang { margin-left: 2px; width: 40px; display: flex; flex-direction: column; align-items: center; font: 12px/18px "Open Sans", sans-serif; }
.tr-clock { width: 64px; margin-left: 1px; display: flex; flex-direction: column; align-items: center; font: 12px/18px "Open Sans", sans-serif; letter-spacing: -.2px; }
.tr-note { position: relative; width: 16px; height: 16px; margin-left: 10px; }
.note-ic { width: 16px; height: 15px; }
.note-badge { position: absolute; left: 6px; top: 4px; width: 15px; height: 15px; border-radius: 50%; background: #333; border: 1px solid #bbb; color: #fff; font: 10px/13px "Open Sans", sans-serif; text-align: center; }
```
